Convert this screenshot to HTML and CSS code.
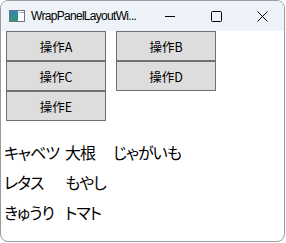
FILE: index.html
```html
<!DOCTYPE html>
<html lang="ja">
<head>
<meta charset="utf-8">
<title>WrapPanelLayoutWindow</title>
<link rel="stylesheet" href="styles.css">
</head>
<body>
<div class="window">
  <div class="titlebar">
    <svg class="app-icon" width="16" height="16" viewBox="0 0 16 16">
      <defs>
        <linearGradient id="g" x1="0" y1="0" x2="0" y2="1">
          <stop offset="0" stop-color="#3a7fc0"/>
          <stop offset="1" stop-color="#2f9a6a"/>
        </linearGradient>
      </defs>
      <rect x="0.5" y="2.5" width="15" height="11" fill="#fff" stroke="#6a7580"/>
      <rect x="1" y="3" width="8" height="10" fill="url(#g)"/>
      <rect x="10" y="4" width="5" height="1" fill="#9ab"/>
    </svg>
    <span class="title">WrapPanelLayoutWi...</span>
    <div class="controls">
      <span class="ctl">
        <svg width="10" height="10" viewBox="0 0 10 10"><path d="M0 5.5H10" stroke="#000" stroke-width="1"/></svg>
      </span>
      <span class="ctl">
        <svg width="11" height="11" viewBox="0 0 11 11"><rect x="0.5" y="0.5" width="10" height="10" rx="1" fill="none" stroke="#000" stroke-width="1"/></svg>
      </span>
      <span class="ctl">
        <svg width="11" height="11" viewBox="0 0 11 11"><path d="M0.5 0.5L10.5 10.5M10.5 0.5L0.5 10.5" stroke="#000" stroke-width="1"/></svg>
      </span>
    </div>
  </div>
  <div class="content">
    <div class="buttons">
      <button class="btn">操作A</button>
      <button class="btn">操作B</button>
      <button class="btn">操作C</button>
      <button class="btn">操作D</button>
      <button class="btn">操作E</button>
    </div>
    <div class="words">
      <span class="w">キャベツ</span>
      <span class="w">レタス</span>
      <span class="w">きゅうり</span>
      <span class="w">大根</span>
      <span class="w">もやし</span>
      <span class="w">トマト</span>
      <span class="w">じゃがいも</span>
    </div>
  </div>
</div>
</body>
</html>
```

FILE: styles.css
```css
html, body {
  margin: 0;
  padding: 0;
  background: #ffffff;
}
.window {
  box-sizing: border-box;
  width: 285px;
  height: 242px;
  border: 1px solid #9a9a9a;
  border-radius: 8px;
  overflow: hidden;
  background: #ffffff;
  display: flex;
  flex-direction: column;
}
.titlebar {
  height: 30px;
  flex: none;
  background: #eef3f9;
  display: flex;
  align-items: center;
  font-family: "Liberation Sans", "Noto Sans", sans-serif;
  font-size: 12px;
  color: #000;
}
.app-icon {
  margin-left: 8px;
  margin-right: 6px;
  flex: none;
}
.title {
  flex: 1;
  white-space: nowrap;
  letter-spacing: -0.7px;
}
.controls {
  display: flex;
  height: 30px;
  margin-right: -1px;
}
.ctl {
  width: 46px;
  display: flex;
  align-items: center;
  justify-content: center;
}
.content {
  flex: 1;
  font-family: "Noto Sans CJK JP", sans-serif;
}
.buttons {
  display: flex;
  flex-wrap: wrap;
}
.btn {
  box-sizing: border-box;
  width: 100px;
  height: 30px;
  margin: 0 5px;
  padding: 0;
  border: 1px solid #707070;
  background: #dddddd;
  font-family: "Noto Sans CJK JP", sans-serif;
  font-size: 12.5px;
  color: #000;
  font-feature-settings: "palt";
}
.words {
  display: grid;
  grid-auto-flow: column;
  grid-template-rows: repeat(3, 30px);
  grid-template-columns: 61px 48px auto;
  margin-top: 16px;
  padding-left: 3px;
  font-size: 16px;
  letter-spacing: -1px;
  font-feature-settings: "palt";
  color: #000;
}
.w {
  display: flex;
  align-items: center;
  white-space: nowrap;
}
```
